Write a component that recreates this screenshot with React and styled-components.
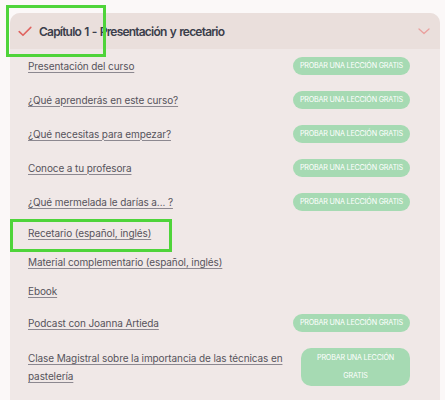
import React from "react";
import styled, { createGlobalStyle } from "styled-components";

const Global = createGlobalStyle`
  html, body { margin: 0; padding: 0; background: #fbf8f8; }
  body { font-family: Inter, "Noto Sans", sans-serif; }
`;

const Page = styled.div`
  width: 445px;
  height: 400px;
  overflow: hidden;
  padding: 13px 5px 0 10px;
  box-sizing: border-box;
  position: relative;
`;

const Panel = styled.section`
  background: #f0e8e7;
  border-radius: 10px 10px 0 0;
  overflow: hidden;
`;

const Header = styled.header`
  display: flex;
  align-items: center;
  height: 36px;
  padding: 0 10px 0 8px;
  background: #eadfdc;
`;

const Title = styled.h2`
  flex: 1;
  margin: 0 0 0 7px;
  font-size: 12px;
  font-weight: 600;
  color: #3b3e4b;
  letter-spacing: -0.8px;
  word-spacing: 1px;
`;

const List = styled.ul`
  list-style: none;
  margin: 0;
  padding: 0 30px 20px 18px;
`;

const Row = styled.li`
  display: flex;
  align-items: center;
  gap: 16px;
  padding: 6px 0;
`;

const Link = styled.a`
  flex: 1 1 auto;
  font-size: 10px;
  letter-spacing: -0.1px;
  line-height: ${(p) => (p.$multi ? "18px" : "17px")};
  color: #56535b;
  text-decoration: underline;
  text-underline-offset: 2px;
  text-decoration-color: #8c8890;
`;

const Try = styled.button`
  flex: 0 ${(p) => (p.$wrap ? 0 : 1)} auto;
  border: 0;
  margin: 2px 0;
  padding: ${(p) => (p.$wrap ? "1px 10px" : "0 7px")};
  min-height: 18px;
  border-radius: 10px;
  background: #a6dab3;
  color: #ffffff;
  font-family: Inter, "Noto Sans", sans-serif;
  font-size: 7.2px;
  line-height: 18px;
  letter-spacing: -0.2px;
  text-transform: uppercase;
  white-space: ${(p) => (p.$wrap ? "normal" : "nowrap")};
  width: ${(p) => (p.$wrap ? "109px" : "auto")};
`;

const Mark = styled.div`
  position: absolute;
  border: 3px solid #4fd43a;
  box-sizing: border-box;
  pointer-events: none;
`;

const Check = () => (
  <svg width="14" height="11" viewBox="0 0 14 11" fill="none">
    <path d="M1.2 5.6 L5 9.3 L12.8 1.4" stroke="#e06460" strokeWidth="1.6" strokeLinecap="round" strokeLinejoin="round" />
  </svg>
);

const Chevron = () => (
  <svg width="12" height="7" viewBox="0 0 12 7" fill="none">
    <path d="M1 1 L6 5.6 L11 1" stroke="#eaa09e" strokeWidth="1.3" strokeLinecap="round" strokeLinejoin="round" />
  </svg>
);

const items = [
  { t: "Presentación del curso", b: true },
  { t: "¿Qué aprenderás en este curso?", b: true },
  { t: "¿Qué necesitas para empezar?", b: true },
  { t: "Conoce a tu profesora", b: true },
  { t: "¿Qué mermelada le darías a... ?", b: true },
  { t: "Recetario (español, inglés)" },
  { t: "Material complementario (español, inglés)" },
  { t: "Ebook" },
  { t: "Podcast con Joanna Artieda", b: true },
  { t: "Clase Magistral sobre la importancia de las técnicas en pastelería", b: true, wrap: true },
];

export default function App() {
  return (
    <>
      <Global />
      <Page>
        <Panel>
          <Header>
            <Check />
            <Title>Capítulo 1 - Presentación y recetario</Title>
            <Chevron />
          </Header>
          <List>
            {items.map((it) => (
              <Row key={it.t}>
                <Link href="#" $multi={it.wrap}>{it.t}</Link>
                {it.b && <Try $wrap={it.wrap}>Probar una lección gratis</Try>}
              </Row>
            ))}
          </List>
        </Panel>
        <Mark style={{ left: 6, top: 5, width: 100, height: 52 }} />
        <Mark style={{ left: 10, top: 219, width: 162, height: 33 }} />
      </Page>
    </>
  );
}
